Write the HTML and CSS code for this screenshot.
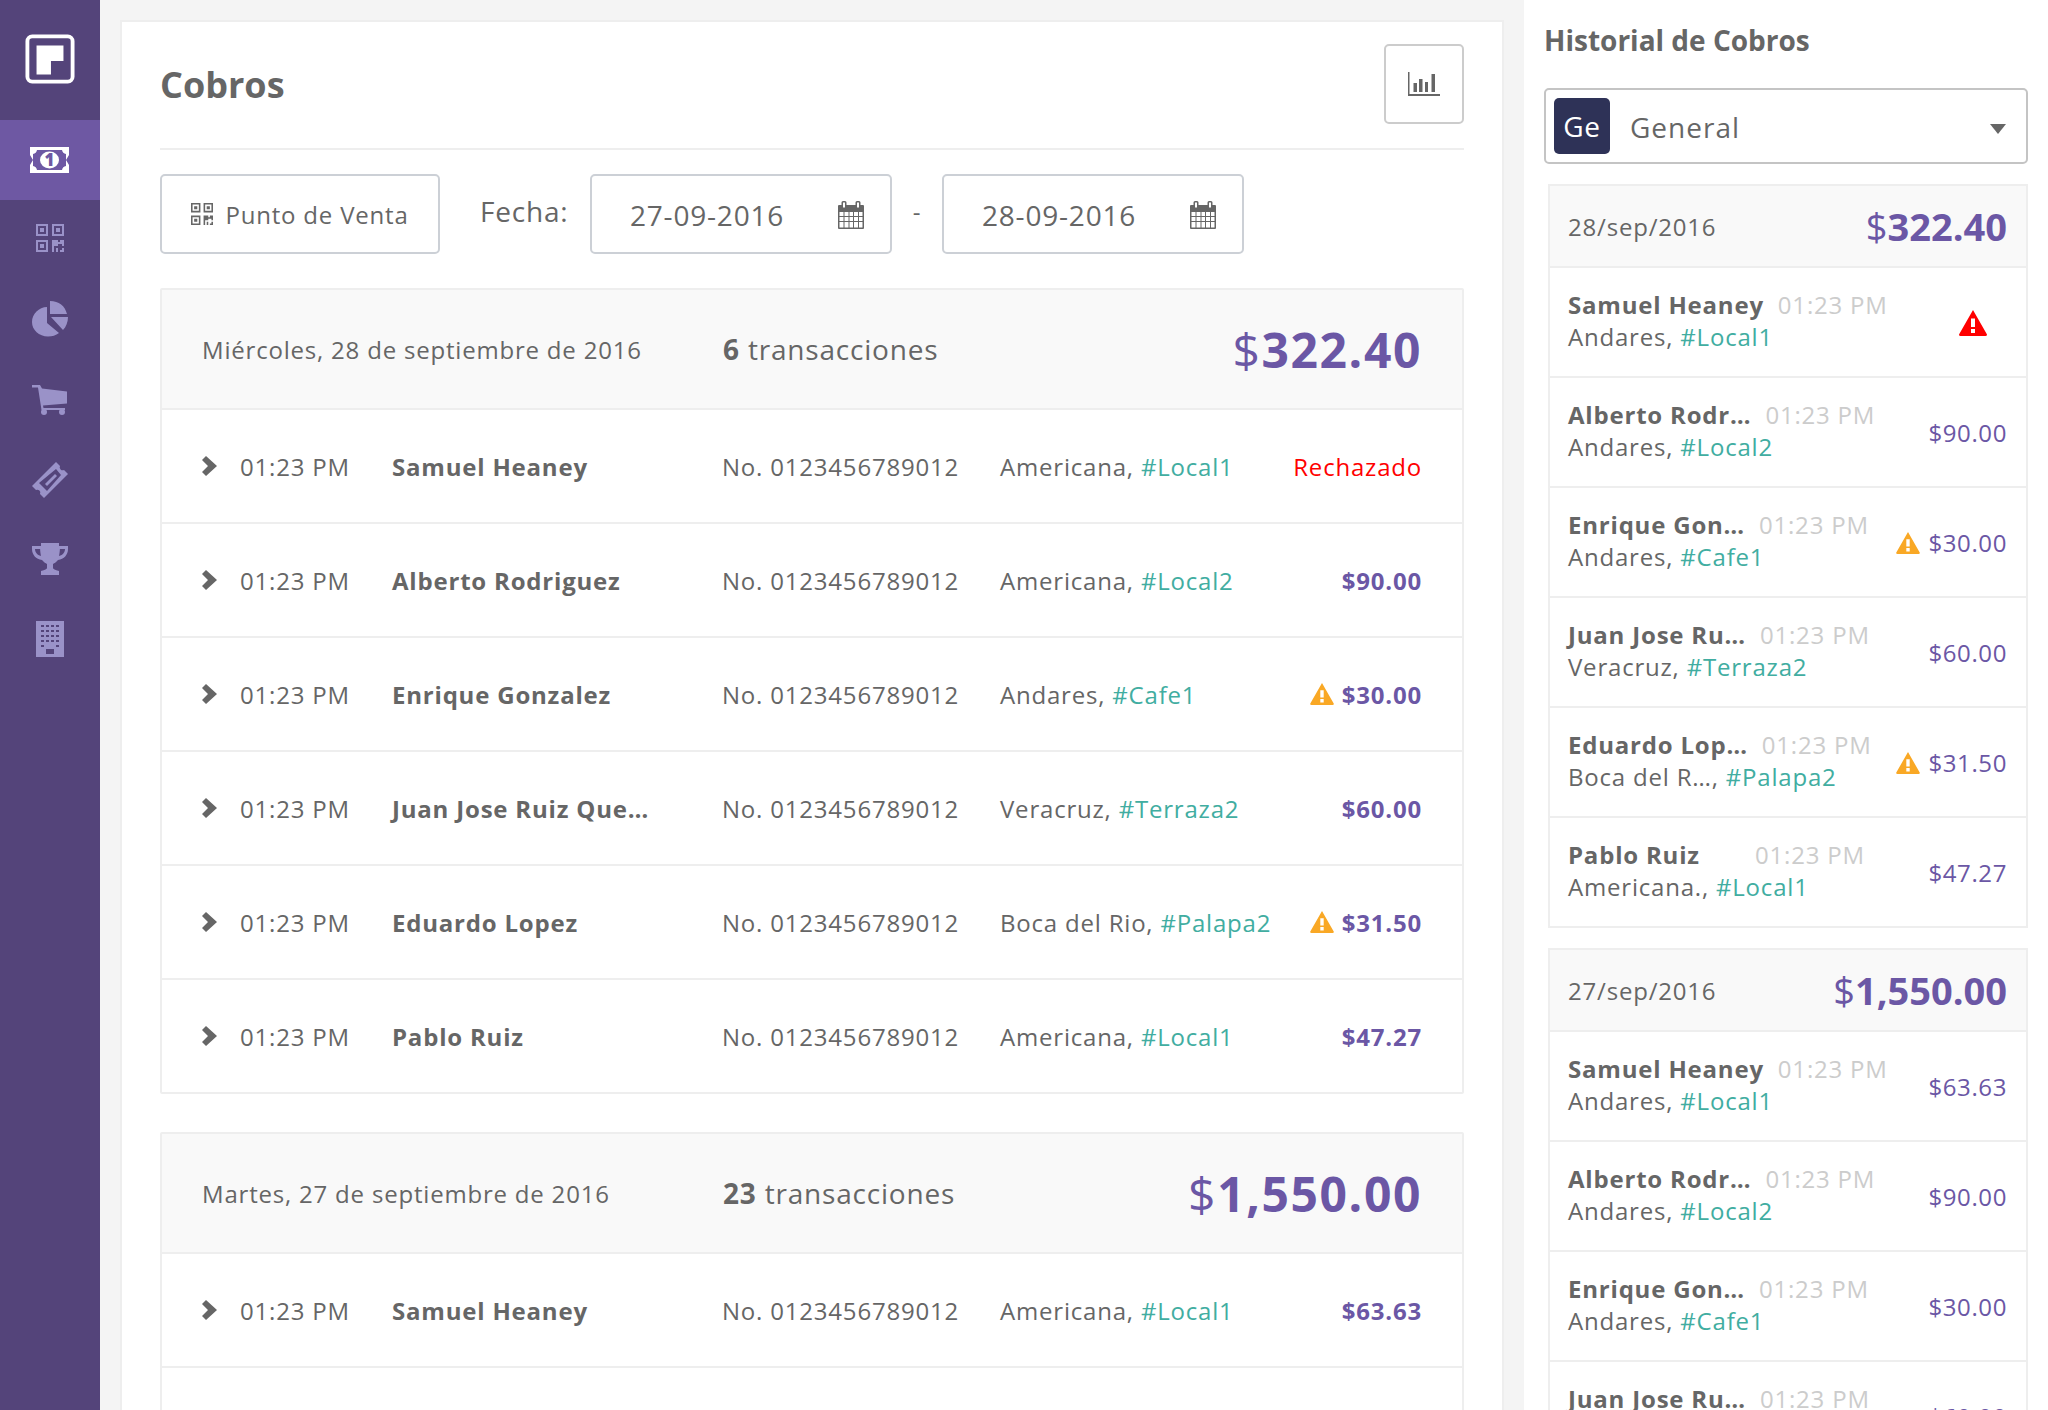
FILE: index.html
```html
<!DOCTYPE html>
<html>
	<head>
		<meta http-equiv="Content-Type" content="text/html; charset=UTF-8">
		<title>Cobros</title>
		<link rel="stylesheet" href="styles.css">
	</head>
	<body>
		<svg class="defs" width="0" height="0">
			<defs>
				<symbol id="i-chevron" viewBox="0 0 16 20"><path d="M4 0 L15 10 L4 20 L0 16 L6 10 L0 4 Z" fill="currentColor"/></symbol>
				<symbol id="i-qr" viewBox="0 0 28 28"><path fill="currentColor" fill-rule="evenodd" d="M0 0h12v12H0zM2 2v8h8V2zM4 4h4v4H4zM16 0h12v12H16zM18 2v8h8V2zM20 4h4v4h-4zM0 16h12v12H0zM2 18v8h8v-8zM4 20h4v4H4zM16 16h6v2h2v-2h4v6h-2v-2h-4v2h-4v6h-2zM20 24h2v4h-2zM24 26h2v2h-2zM26 24h2v4h-2z"/></symbol>
				<symbol id="i-calendar" viewBox="0 0 26 28"><path fill="currentColor" fill-rule="evenodd" d="M5 0h2a1.500 1.500 0 0 1 1.500 1.500V4h9V1.500A1.500 1.500 0 0 1 19 0h2a1.500 1.500 0 0 1 1.500 1.500V4H25a1 1 0 0 1 1 1v22a1 1 0 0 1-1 1H1a1 1 0 0 1-1-1V5a1 1 0 0 1 1-1h2.500V1.500A1.500 1.500 0 0 1 5 0zM1.500 11v4h4v-4zM6.500 11v4h4v-4zM11.500 11v4h3.500v-4zM16 11v4h4v-4zM21 11v4h3.500v-4zM1.500 16v4h4v-4zM6.500 16v4h4v-4zM11.500 16v4h3.500v-4zM16 16v4h4v-4zM21 16v4h3.500v-4zM1.500 21v5.500h4V21zM6.500 21v5.500h4V21zM11.500 21v5.500h3.500V21zM16 21v5.500h4V21zM21 21v5.500h3.500V21zM5 1.500v5h2v-5zM19 1.500v5h2v-5z"/></symbol>
				<symbol id="i-warn" viewBox="0 0 28 26"><path fill="currentColor" fill-rule="evenodd" d="M14 0 L28 24.500 Q28 26 26.500 26 H1.500 Q0 26 0 24.500 Z M12 8.500 v8.500 h4 v-8.500 Z M12 19 v4 h4 v-4 Z"/></symbol>
			</defs>
		</svg>

		<div class="app">
			<nav class="sidebar">
				<div class="logo">
					<svg width="50" height="50" viewBox="0 0 52 52"><rect x="2.500" y="2.500" width="47" height="47" rx="5" fill="none" stroke="#fff" stroke-width="4"/><path d="M12 12h28v16H27v14H12z" fill="#fff"/></svg>
				</div>
				<a class="nav-item active">
					<svg width="40" height="28" viewBox="0 0 40 28"><path fill="#fff" d="M0 1h39v26H0z"/><path fill="#6e58a3" d="M7 4h25a5 5 0 0 0 4 4v12a5 5 0 0 0-4 4H7a5 5 0 0 0-4-4V8a5 5 0 0 0 4-4z"/><ellipse cx="19.500" cy="14" rx="9.500" ry="8.500" fill="#fff"/><path d="M0 9l3 5l-3 5zM39 9l-3 5l3 5z" fill="#6e58a3"/><text x="19.500" y="20" class="bill-digit">1</text></svg>
				</a>
				<a class="nav-item"><svg class="lift-4" width="28" height="28"><use href="#i-qr"/></svg></a>
				<a class="nav-item">
					<svg class="lift-2" width="36" height="36" viewBox="0 0 36 36"><path fill="currentColor" d="M15 6v16l12 10a17 15 0 0 1-11 3.500C7 35.500 0 29 0 21S7 6 15 6zM18 0c9 0 15 5 17 13H18zM19 16h17c0 5-2 10-5 13z"/></svg>
				</a>
				<a class="nav-item">
					<svg width="36" height="30" viewBox="0 0 36 30"><path fill="currentColor" d="M0 0h8l2 3.500 25 3v12l-24 2 .5 2.500H33v2H9.500L6 2.500H0z"/><circle cx="12" cy="27" r="3" fill="currentColor"/><circle cx="30" cy="27" r="3" fill="currentColor"/></svg>
				</a>
				<a class="nav-item">
					<svg width="36" height="36" viewBox="0 0 36 36"><path fill="currentColor" fill-rule="evenodd" d="M24 0l4 4a3 3 0 0 0 4 4l4 4-24 24-4-4a3 3 0 0 0-4-4l-4-4zM24 7L7 21l8 8 14-16z"/><path fill="currentColor" d="M23 12l2 2-10 10-2-2z"/></svg>
				</a>
				<a class="nav-item">
					<svg class="lift-2" width="36" height="32" viewBox="0 0 36 32"><path fill="currentColor" fill-rule="evenodd" d="M9 0h18v3h9v3c0 6-4 10-10 11-1.500 2-3.500 3-5 4v4c0 1 2 2 6 3v4H9v-4c4-1 6-2 6-3v-4c-1.500-1-3.500-2-5-4C4 16 0 12 0 6V3h9zM3 6c0 3 2 6 6 7-.5-2-.8-5-.9-7zM33 6h-5.100c-.1 2-.4 5-.9 7 4-1 6-4 6-7z"/></svg>
				</a>
				<a class="nav-item">
					<svg class="lift-2" width="28" height="36" viewBox="0 0 28 36"><path fill="currentColor" fill-rule="evenodd" d="M0 0h28v36H0zM5 4v2h3V4zM10 4v2h3V4zM15 4v2h3V4zM20 4v2h3V4zM5 9v2h3V9zM10 9v2h3V9zM15 9v2h3V9zM20 9v2h3V9zM5 14v2h3v-2zM10 14v2h3v-2zM15 14v2h3v-2zM20 14v2h3v-2zM5 19v2h3v-2zM10 19v2h3v-2zM15 19v2h3v-2zM20 19v2h3v-2zM5 24v2h3v-2zM20 24v2h3v-2zM10 28v5h8v-5z"/></svg>
				</a>
			</nav>

			<main class="content">
				<section class="card">
					<div class="card-head">
						<h1>Cobros</h1>
						<button type="button" class="chart-btn">
							<svg width="32" height="24" viewBox="0 0 32 24"><path fill="#666" d="M0 0h1.500v22H32v2H0zM5.500 11H9v9H5.500zM11 7h3.500v13H11zM17 10h3v10h-3zM23.500 2H27v18h-3.500z"/></svg>
						</button>
					</div>
					<div class="filters">
						<button type="button" class="pos-btn"><svg width="22" height="22"><use href="#i-qr"/></svg>Punto de Venta</button>
						<label class="date-label">Fecha:</label>
						<div class="date-box"><span>27-09-2016</span><svg width="26" height="28"><use href="#i-calendar"/></svg></div>
						<span class="date-sep">-</span>
						<div class="date-box"><span>28-09-2016</span><svg width="26" height="28"><use href="#i-calendar"/></svg></div>
					</div>

					<div class="day">
						<div class="day-head">
							<span class="day-date">Miércoles, 28 de septiembre de 2016</span>
							<span class="day-count"><b>6</b> transacciones</span>
							<span class="day-total"><i>$</i>322.40</span>
						</div>
						<div class="row">
							<svg class="chevron" width="16" height="20"><use href="#i-chevron"/></svg>
							<span>01:23 PM</span><b class="row-name">Samuel Heaney</b><span>No. 0123456789012</span>
							<span>Americana, <a class="tag">#Local1</a></span>
							<span class="rejected">Rechazado</span>
						</div>
						<div class="row">
							<svg class="chevron" width="16" height="20"><use href="#i-chevron"/></svg>
							<span>01:23 PM</span><b class="row-name">Alberto Rodriguez</b><span>No. 0123456789012</span>
							<span>Americana, <a class="tag">#Local2</a></span>
							<span class="amount">$90.00</span>
						</div>
						<div class="row">
							<svg class="chevron" width="16" height="20"><use href="#i-chevron"/></svg>
							<span>01:23 PM</span><b class="row-name">Enrique Gonzalez</b><span>No. 0123456789012</span>
							<span>Andares, <a class="tag">#Cafe1</a></span>
							<span class="amount"><svg class="warn" width="24" height="22"><use href="#i-warn"/></svg>$30.00</span>
						</div>
						<div class="row">
							<svg class="chevron" width="16" height="20"><use href="#i-chevron"/></svg>
							<span>01:23 PM</span><b class="row-name">Juan Jose Ruiz Que…</b><span>No. 0123456789012</span>
							<span>Veracruz, <a class="tag">#Terraza2</a></span>
							<span class="amount">$60.00</span>
						</div>
						<div class="row">
							<svg class="chevron" width="16" height="20"><use href="#i-chevron"/></svg>
							<span>01:23 PM</span><b class="row-name">Eduardo Lopez</b><span>No. 0123456789012</span>
							<span>Boca del Rio, <a class="tag">#Palapa2</a></span>
							<span class="amount"><svg class="warn" width="24" height="22"><use href="#i-warn"/></svg>$31.50</span>
						</div>
						<div class="row">
							<svg class="chevron" width="16" height="20"><use href="#i-chevron"/></svg>
							<span>01:23 PM</span><b class="row-name">Pablo Ruiz</b><span>No. 0123456789012</span>
							<span>Americana, <a class="tag">#Local1</a></span>
							<span class="amount">$47.27</span>
						</div>
					</div>

					<div class="day">
						<div class="day-head">
							<span class="day-date">Martes, 27 de septiembre de 2016</span>
							<span class="day-count"><b>23</b> transacciones</span>
							<span class="day-total"><i>$</i>1,550.00</span>
						</div>
						<div class="row">
							<svg class="chevron" width="16" height="20"><use href="#i-chevron"/></svg>
							<span>01:23 PM</span><b class="row-name">Samuel Heaney</b><span>No. 0123456789012</span>
							<span>Americana, <a class="tag">#Local1</a></span>
							<span class="amount">$63.63</span>
						</div>
						<div class="row">
							<svg class="chevron" width="16" height="20"><use href="#i-chevron"/></svg>
							<span>01:23 PM</span><b class="row-name">Alberto Rodriguez</b><span>No. 0123456789012</span>
							<span>Americana, <a class="tag">#Local2</a></span>
							<span class="amount">$90.00</span>
						</div>
					</div>
				</section>
			</main>

			<aside class="history">
				<h2>Historial de Cobros</h2>
				<div class="select">
					<span class="chip">Ge</span>
					<span class="select-text">General</span>
					<span class="caret"></span>
				</div>

				<div class="hist-day">
					<div class="hist-head"><span>28/sep/2016</span><span class="hist-total"><i>$</i>322.40</span></div>
					<div class="hist-row">
						<div class="hist-info">
							<div><b class="hist-name">Samuel Heaney</b><span class="hist-time">01:23 PM</span></div>
							<div>Andares, <a class="tag">#Local1</a></div>
						</div>
						<svg class="alert" width="28" height="26"><use href="#i-warn"/></svg>
					</div>
					<div class="hist-row">
						<div class="hist-info">
							<div><b class="hist-name">Alberto Rodr…</b><span class="hist-time">01:23 PM</span></div>
							<div>Andares, <a class="tag">#Local2</a></div>
						</div>
						<span class="hist-amount">$90.00</span>
					</div>
					<div class="hist-row">
						<div class="hist-info">
							<div><b class="hist-name">Enrique Gon…</b><span class="hist-time">01:23 PM</span></div>
							<div>Andares, <a class="tag">#Cafe1</a></div>
						</div>
						<span class="hist-amount"><svg class="warn" width="24" height="22"><use href="#i-warn"/></svg>$30.00</span>
					</div>
					<div class="hist-row">
						<div class="hist-info">
							<div><b class="hist-name">Juan Jose Ru…</b><span class="hist-time">01:23 PM</span></div>
							<div>Veracruz, <a class="tag">#Terraza2</a></div>
						</div>
						<span class="hist-amount">$60.00</span>
					</div>
					<div class="hist-row">
						<div class="hist-info">
							<div><b class="hist-name">Eduardo Lop…</b><span class="hist-time">01:23 PM</span></div>
							<div>Boca del R…, <a class="tag">#Palapa2</a></div>
						</div>
						<span class="hist-amount"><svg class="warn" width="24" height="22"><use href="#i-warn"/></svg>$31.50</span>
					</div>
					<div class="hist-row">
						<div class="hist-info">
							<div><b class="hist-name wide">Pablo Ruiz</b><span class="hist-time">01:23 PM</span></div>
							<div>Americana., <a class="tag">#Local1</a></div>
						</div>
						<span class="hist-amount">$47.27</span>
					</div>
				</div>

				<div class="hist-day">
					<div class="hist-head"><span>27/sep/2016</span><span class="hist-total"><i>$</i>1,550.00</span></div>
					<div class="hist-row">
						<div class="hist-info">
							<div><b class="hist-name">Samuel Heaney</b><span class="hist-time">01:23 PM</span></div>
							<div>Andares, <a class="tag">#Local1</a></div>
						</div>
						<span class="hist-amount">$63.63</span>
					</div>
					<div class="hist-row">
						<div class="hist-info">
							<div><b class="hist-name">Alberto Rodr…</b><span class="hist-time">01:23 PM</span></div>
							<div>Andares, <a class="tag">#Local2</a></div>
						</div>
						<span class="hist-amount">$90.00</span>
					</div>
					<div class="hist-row">
						<div class="hist-info">
							<div><b class="hist-name">Enrique Gon…</b><span class="hist-time">01:23 PM</span></div>
							<div>Andares, <a class="tag">#Cafe1</a></div>
						</div>
						<span class="hist-amount">$30.00</span>
					</div>
					<div class="hist-row">
						<div class="hist-info">
							<div><b class="hist-name">Juan Jose Ru…</b><span class="hist-time">01:23 PM</span></div>
							<div>Veracruz, <a class="tag">#Terraza2</a></div>
						</div>
						<span class="hist-amount">$60.00</span>
					</div>
				</div>
			</aside>
		</div>
	</body>
</html>
```

FILE: styles.css
```css
html, body {
	margin: 0;
	height: 100%;
	overflow: hidden;
}
body {
	background-color: #f4f4f4;
	color: #666;
	font-family: "Open Sans", "Noto Sans", sans-serif;
	font-size: 24px;
	letter-spacing: 0.8px;
	font-kerning: normal;
	text-rendering: optimizeLegibility;
}
.defs {
	display: none;
}
button {
	font-family: inherit;
	color: inherit;
	letter-spacing: inherit;
	background: #fff;
	cursor: pointer;
}
.app {
	display: flex;
	height: 1410px;
}

/* barra lateral */
.sidebar {
	width: 100px;
	flex: none;
	background-color: #54447a;
	color: #9a92c8;
}
.logo {
	height: 118px;
	padding-bottom: 2px;
	display: flex;
	align-items: center;
	justify-content: center;
}
.nav-item {
	height: 80px;
	display: flex;
	align-items: center;
	justify-content: center;
}
.nav-item.active {
	background-color: #6e58a3;
}
.lift-2 {
	margin-bottom: 2px;
}
.lift-4 {
	margin-bottom: 4px;
}
.bill-digit {
	font-size: 17px;
	font-weight: 800;
	fill: #6e58a3;
	text-anchor: middle;
	letter-spacing: 0;
}

/* contenido */
.content {
	width: 1424px;
	flex: none;
	padding: 20px 20px 0 20px;
	box-sizing: border-box;
}
.card {
	background: #fff;
	border: 2px solid #eee;
	padding: 20px 38px 0 38px;
	height: 1500px;
	box-sizing: border-box;
}
.card-head {
	display: flex;
	justify-content: space-between;
	align-items: center;
	height: 84px;
	padding-bottom: 22px;
	border-bottom: 2px solid #eee;
}
.card-head h1 {
	margin: 2px 0 0;
	font-size: 36px;
	font-weight: 700;
	letter-spacing: 0;
	line-height: 80px;
}
.chart-btn {
	width: 80px;
	height: 80px;
	border: 2px solid #ccc;
	border-radius: 5px;
	display: flex;
	align-items: center;
	justify-content: center;
	padding: 0;
}
.filters {
	display: flex;
	align-items: center;
	margin-top: 24px;
	height: 80px;
}
.pos-btn {
	width: 280px;
	height: 80px;
	border: 2px solid #ccd0d6;
	border-radius: 5px;
	font-size: 24px;
	display: flex;
	align-items: center;
	justify-content: center;
	gap: 12px;
	padding: 0;
}
.date-label {
	margin-left: 40px;
	width: 110px;
	font-size: 28px;
	margin-top: -6px;
}
.date-box {
	width: 302px;
	height: 80px;
	box-sizing: border-box;
	border: 2px solid #ccd0d6;
	border-radius: 5px;
	display: flex;
	align-items: center;
	justify-content: space-between;
	padding: 2px 26px 0 38px;
	font-size: 28px;
}
.date-sep {
	width: 50px;
	text-align: center;
	margin-top: -6px;
}

/* dias */
.day {
	border: 2px solid #eee;
	margin-top: 38px;
	border-radius: 2px;
}
.filters + .day {
	margin-top: 34px;
}
.day-head {
	display: grid;
	grid-template-columns: 520px 1fr auto;
	align-items: center;
	background-color: #f9f9f9;
	padding: 0 40px;
	height: 118px;
	border-bottom: 2px solid #eee;
}
.day-count {
	font-size: 28px;
	margin-left: 1px;
}
.day-total {
	color: #6b57a5;
	font-size: 48px;
	font-weight: 700;
	letter-spacing: 1.6px;
}
.day-total i, .hist-total i {
	font-style: normal;
	font-weight: 400;
}
.row {
	display: grid;
	grid-template-columns: 38px 152px 330px 278px 1fr auto;
	align-items: center;
	height: 112px;
	padding: 0 40px;
	border-bottom: 2px solid #eee;
}
.row:last-child {
	border-bottom: 0;
}
.row-name {
	font-weight: 700;
}
.tag {
	color: #41ada1;
}
.rejected {
	color: #f00;
}
.amount {
	color: #6b57a5;
	font-weight: 700;
	display: flex;
	align-items: center;
	justify-content: flex-end;
}
.warn {
	color: #f9a825;
	margin-right: 8px;
}

/* historial */
.history {
	flex: 1;
	background: #fff;
	padding: 0 20px;
}
.history h2 {
	margin: 0;
	font-size: 28px;
	font-weight: 700;
	letter-spacing: 0;
	line-height: 40px;
	padding-top: 20px;
}
.select {
	margin-top: 28px;
	height: 76px;
	box-sizing: border-box;
	border: 2px solid #c4c4c4;
	border-radius: 5px;
	display: flex;
	align-items: center;
	padding: 2px 20px 0 8px;
	font-size: 28px;
	letter-spacing: 1px;
}
.chip {
	width: 56px;
	height: 56px;
	background-color: #2e3257;
	color: #fff;
	border-radius: 5px;
	display: flex;
	align-items: center;
	justify-content: center;
	margin-top: -2px;
	letter-spacing: 0.8px;
}
.select-text {
	flex: 1;
	margin-left: 20px;
}
.caret {
	border-top: 10px solid #666;
	border-left: 8px solid transparent;
	border-right: 8px solid transparent;
	margin-top: 4px;
}
.hist-day {
	margin: 20px 0 0 4px;
	border: 2px solid #eee;
}
.hist-head {
	display: flex;
	justify-content: space-between;
	align-items: center;
	height: 80px;
	padding: 0 19px 0 18px;
	background-color: #f9f9f9;
	border-bottom: 2px solid #eee;
}
.hist-total {
	color: #6b57a5;
	font-size: 38px;
	font-weight: 700;
	letter-spacing: 0;
}
.hist-row {
	display: flex;
	justify-content: space-between;
	align-items: center;
	height: 108px;
	padding: 0 19px 0 18px;
	border-bottom: 2px solid #eee;
	line-height: 32px;
}
.hist-row:last-child {
	border-bottom: 0;
}
.hist-info {
	padding-bottom: 2px;
}
.hist-name {
	font-weight: 700;
}
.hist-name.wide {
	display: inline-block;
	width: 173px;
}
.hist-time {
	color: #ccc;
	margin-left: 14px;
}
.hist-amount {
	color: #6b57a5;
	display: flex;
	align-items: center;
	letter-spacing: 0.6px;
	padding-top: 2px;
}
.alert {
	color: #f00;
	margin: 2px 20px 0 0;
}
```
